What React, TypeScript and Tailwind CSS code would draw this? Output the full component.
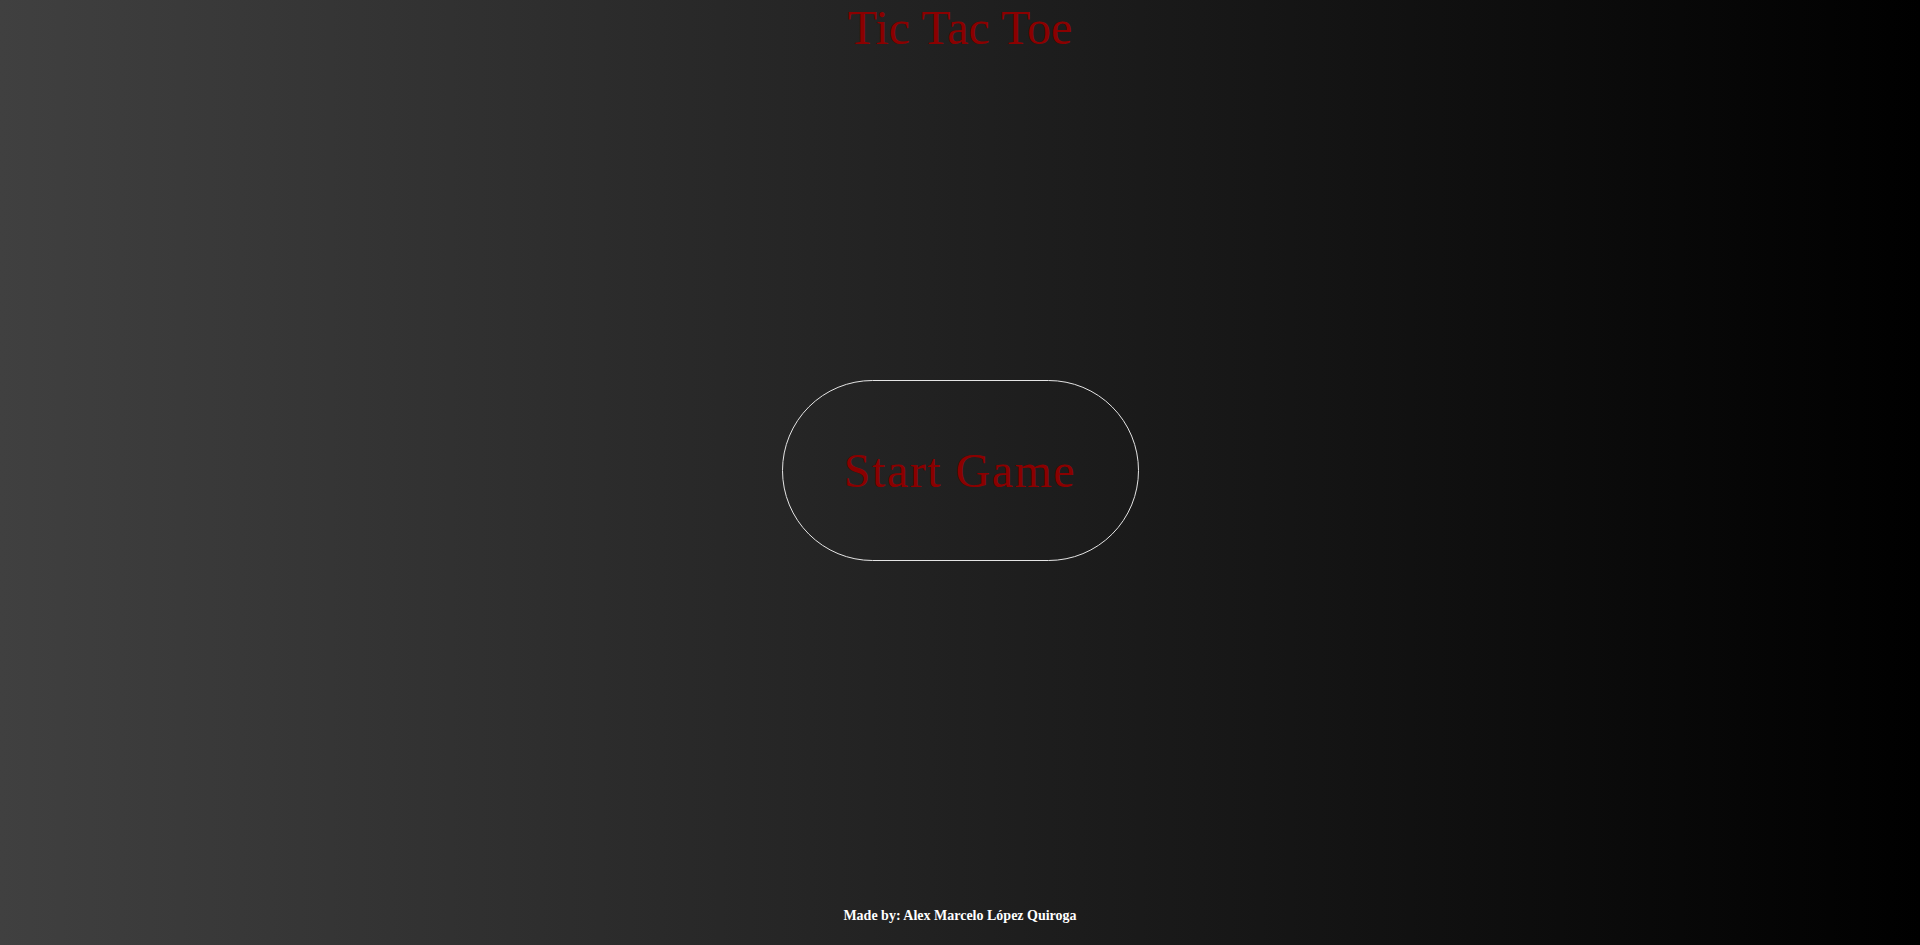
export default function App() {
  return (
    <div className="flex h-screen w-full flex-col items-center bg-[linear-gradient(to_right,#404040,#000000)] font-['Liberation_Serif',serif]">
      <h1 className="m-0 text-[48px] leading-[56px] font-normal text-[#8b0000]">
        Tic Tac Toe
      </h1>
      <main className="flex flex-1 items-center justify-center pb-[22px]">
        <button
          type="button"
          className="flex h-[181px] w-[357px] items-center justify-center rounded-full border border-[#e5e5e5] bg-transparent text-[48px] tracking-[1.5px] text-[#8b0000]"
        >
          Start Game
        </button>
      </main>
      <footer className="pb-[20px] text-[14px] leading-[18px] font-bold text-white">
        Made by: Alex Marcelo López Quiroga
      </footer>
    </div>
  );
}
